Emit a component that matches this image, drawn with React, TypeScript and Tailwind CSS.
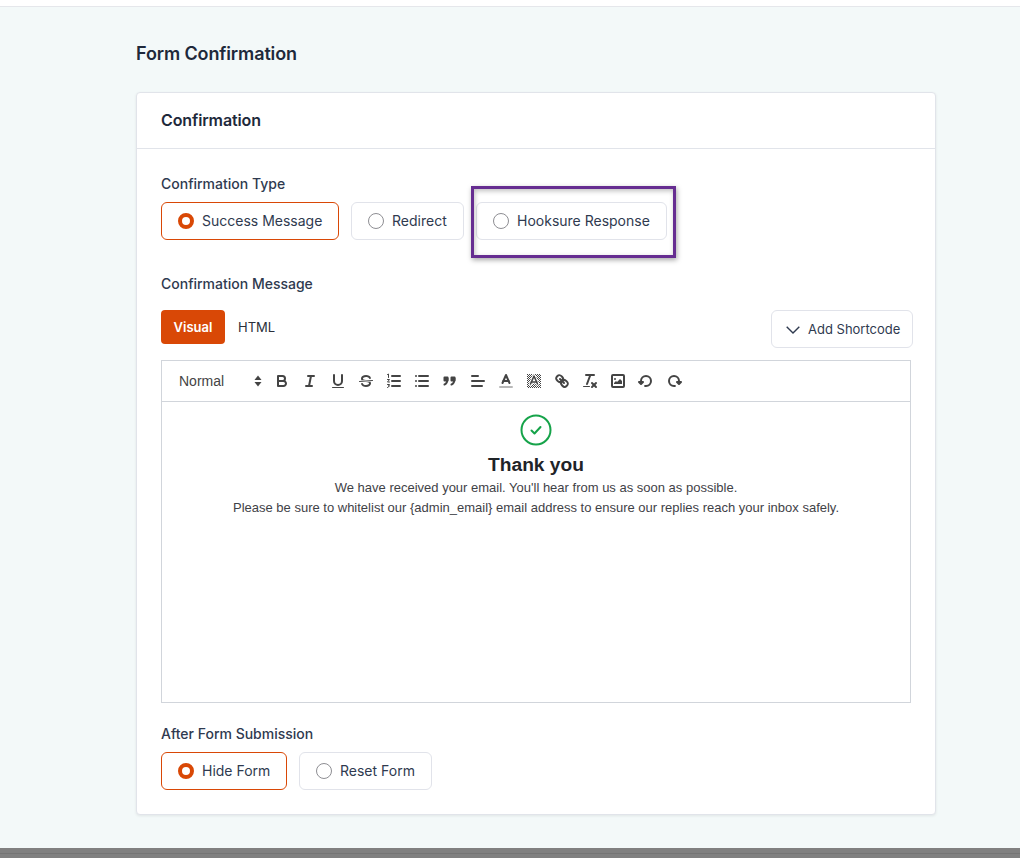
import type { ReactNode } from "react";

function Radio({ label, checked, className }: { label: string; checked?: boolean; className: string }) {
  return (
    <label
      className={`flex h-[38px] items-center gap-2 rounded-md border bg-white text-sm text-[#2f3a4f] ${
        checked ? "border-[#d94806]" : "border-[#e1e3ea]"
      } ${className}`}
    >
      {checked ? (
        <span className="size-4 rounded-full border-[4px] border-[#d94806] bg-white" />
      ) : (
        <span className="size-4 rounded-full border border-[#8e8e93] bg-white" />
      )}
      {label}
    </label>
  );
}

function ToolIcon({ children }: { children: ReactNode }) {
  return (
    <span className="flex h-6 w-7 items-center justify-center">
      <svg
        viewBox="0 0 18 18"
        className="size-[18px] fill-none stroke-[#444444] stroke-2"
        strokeLinecap="round"
        strokeLinejoin="round"
      >
        {children}
      </svg>
    </span>
  );
}

function Toolbar() {
  return (
    <div className="flex h-[41px] items-center border-b border-[#d1d5db] pl-[9px]">
      <div className="flex w-[97px] items-center justify-between pr-[1px] pl-2 font-['Liberation_Sans',sans-serif] text-sm text-[#444444]">
        Normal
        <svg viewBox="0 0 18 18" className="size-[18px] fill-[#444444]">
          <path d="M9 3.5 12.5 8H5.5Z" />
          <path d="M9 14.5 12.5 10H5.5Z" />
        </svg>
      </div>
      <ToolIcon>
        <path d="M5,4H9.5A2.5,2.5,0,0,1,12,6.5v0A2.5,2.5,0,0,1,9.5,9H5V4Z" />
        <path d="M5,9h5.5A2.5,2.5,0,0,1,13,11.5v0A2.5,2.5,0,0,1,10.5,14H5V9Z" />
      </ToolIcon>
      <ToolIcon>
        <line x1="7" x2="13" y1="4" y2="4" />
        <line x1="5" x2="11" y1="14" y2="14" />
        <line x1="8" x2="10" y1="14" y2="4" />
      </ToolIcon>
      <ToolIcon>
        <path d="M5,3V9a4,4,0,0,0,4,4h0a4,4,0,0,0,4-4V3" />
        <rect x="3" y="15" width="12" height="1" rx="0.5" className="fill-[#444444] stroke-0" />
      </ToolIcon>
      <ToolIcon>
        <line x1="15.5" x2="2.5" y1="8.5" y2="9.5" className="stroke-1" />
        <path
          className="fill-[#444444] stroke-0"
          d="M9.007,8C6.542,7.791,6,7.519,6,6.5,6,5.792,7.283,5,9,5c1.571,0,2.765.679,2.969,1.309a1,1,0,0,0,1.9-.617C13.356,4.106,11.354,3,9,3,6.2,3,4,4.538,4,6.5a3.2,3.2,0,0,0,.5,1.843Z"
        />
        <path
          className="fill-[#444444] stroke-0"
          d="M8.984,10C11.457,10.208,12,10.479,12,11.5c0,.708-1.283,1.5-3,1.5-1.571,0-2.765-.679-2.969-1.309a1,1,0,1,0-1.9.617C4.644,13.894,6.646,15,9,15c2.8,0,5-1.538,5-3.5a3.2,3.2,0,0,0-.5-1.843Z"
        />
      </ToolIcon>
      <ToolIcon>
        <line x1="7" x2="15" y1="4" y2="4" />
        <line x1="7" x2="15" y1="9" y2="9" />
        <line x1="7" x2="15" y1="14" y2="14" />
        <path className="stroke-1" d="M2.5 2.5 3.5 2V5.5M2.5 7.5H4.5L2.5 10H4.5M2.5 12.5H4.5L3.5 14H4.5L2.5 15.5" />
      </ToolIcon>
      <ToolIcon>
        <line x1="6" x2="15" y1="4" y2="4" />
        <line x1="6" x2="15" y1="9" y2="9" />
        <line x1="6" x2="15" y1="14" y2="14" />
        <line x1="3" x2="3" y1="4" y2="4" />
        <line x1="3" x2="3" y1="9" y2="9" />
        <line x1="3" x2="3" y1="14" y2="14" />
      </ToolIcon>
      <ToolIcon>
        <rect x="3.5" y="5.5" width="3" height="3" className="fill-[#444444]" />
        <rect x="10.5" y="5.5" width="3" height="3" className="fill-[#444444]" />
        <path d="M6.5,6.5c0,3-.6,5-3,6" />
        <path d="M13.5,6.5c0,3-.6,5-3,6" />
      </ToolIcon>
      <ToolIcon>
        <line x1="3" x2="9" y1="4" y2="4" />
        <line x1="3" x2="15" y1="9" y2="9" />
        <line x1="3" x2="13" y1="14" y2="14" />
      </ToolIcon>
      <ToolIcon>
        <line x1="3" x2="15" y1="15" y2="15" className="stroke-[#b8b8b8]" />
        <polyline points="5.5 11 9 3 12.5 11" />
        <line x1="11.63" x2="6.38" y1="9" y2="9" />
      </ToolIcon>
      <ToolIcon>
        <defs>
          <pattern id="hatch" width="2" height="2" patternUnits="userSpaceOnUse">
            <rect width="1" height="1" className="fill-[#444444] stroke-0" />
            <rect x="1" y="1" width="1" height="1" className="fill-[#444444] stroke-0" />
          </pattern>
        </defs>
        <rect x="2" y="2" width="14" height="14" fill="url(#hatch)" className="stroke-0" />
        <polyline points="5.5 12 9 4 12.5 12" className="stroke-white stroke-[3.4]" />
        <line x1="11.63" x2="6.38" y1="10" y2="10" className="stroke-white stroke-[3]" />
        <polyline points="5.5 12 9 4 12.5 12" className="stroke-[1.6]" />
        <line x1="11.63" x2="6.38" y1="10" y2="10" className="stroke-[1.6]" />
      </ToolIcon>
      <ToolIcon>
        <line x1="7" x2="11" y1="7" y2="11" />
        <path d="M8.9,4.577a3.476,3.476,0,0,1,.36,4.679A3.476,3.476,0,0,1,4.577,8.9C3.185,7.5,2.035,6.4,4.217,4.217S7.5,3.185,8.9,4.577Z" />
        <path d="M13.423,9.1a3.476,3.476,0,0,0-4.679-.36,3.476,3.476,0,0,0,.36,4.679c1.392,1.392,2.5,2.542,4.679.36S14.815,10.5,13.423,9.1Z" />
      </ToolIcon>
      <ToolIcon>
        <line x1="5" x2="13" y1="3" y2="3" />
        <line x1="6" x2="9.35" y1="12" y2="3" />
        <line x1="11" x2="15" y1="11" y2="15" />
        <line x1="15" x2="11" y1="11" y2="15" />
        <rect x="2" y="14" width="7" height="1" rx="0.5" className="fill-[#444444] stroke-0" />
      </ToolIcon>
      <ToolIcon>
        <rect x="3" y="3" width="12" height="12" rx="1" />
        <circle cx="6" cy="7" r="1" className="fill-[#444444] stroke-0" />
        <polyline points="5 12 5 11 7 9 8 10 11 7 13 9 13 12 5 12" className="fill-[#444444] stroke-0" />
      </ToolIcon>
      <ToolIcon>
        <polygon points="6 10 4 12 2 10 6 10" className="fill-[#444444]" />
        <path d="M8.09,13.91A4.6,4.6,0,0,0,9,14,5,5,0,1,0,4,9" />
      </ToolIcon>
      <ToolIcon>
        <polygon points="12 10 14 12 16 10 12 10" className="fill-[#444444]" />
        <path d="M9.91,13.91A4.6,4.6,0,0,1,9,14a5,5,0,1,1,5-5" />
      </ToolIcon>
    </div>
  );
}

export default function App() {
  return (
    <div className="flex h-[858px] flex-col overflow-hidden bg-[#f3f9f9] font-['Inter',sans-serif]">
      <div className="h-[7px] shrink-0 border-b border-[#e5e7eb] bg-white" />
      <main className="ml-[136px] w-[800px] flex-1">
        <h1 className="mt-[35px] mb-[27px] text-lg leading-[23px] font-semibold tracking-[-0.12px] text-[#1e293b]">Form Confirmation</h1>
        <section className="h-[723px] rounded border border-[#e1e4ea] bg-white shadow-[0_1px_3px_rgba(0,0,0,0.08)]">
          <h2 className="flex h-14 items-center border-b border-[#e1e4ea] px-6 pb-0.5 text-base font-semibold tracking-[-0.12px] text-[#1e293b]">
            Confirmation
          </h2>
          <div className="px-6 pt-[26px]">
            <div className="text-sm leading-[18px] font-medium text-[#2f3a4f]">Confirmation Type</div>
            <div className="relative mt-[9px] flex gap-3">
              <Radio label="Success Message" checked className="w-[178px] pl-4" />
              <Radio label="Redirect" className="w-[113px] pl-4" />
              <Radio label="Hooksure Response" className="w-[191px] pl-4" />
              <div className="absolute top-[-16px] left-[310px] h-[72px] w-[205px] border-[3px] border-[#662d91] shadow-[1px_2px_5px_rgba(0,0,0,0.35),inset_1px_2px_5px_rgba(0,0,0,0.25)]" />
            </div>

            <div className="mt-[35px] text-sm leading-[18px] font-medium text-[#2f3a4f]">
              Confirmation Message
            </div>
            <div className="mt-[17px] flex items-start justify-between">
              <div className="flex items-center pt-px">
                <button className="-mt-px h-[34px] w-16 rounded bg-[#d94806] pt-px text-[13px] font-semibold text-white">Visual</button>
                <button className="ml-[13px] text-[13px] text-[#2a2f3a]">HTML</button>
              </div>
              <button className="-mr-0.5 flex h-[38px] w-[142px] items-center gap-2 rounded-md border border-[#e1e3ea] bg-white pt-0.5 pl-[14px] text-[13px] text-[#2f3a4f]">
                <svg viewBox="0 0 14 8" className="h-2 w-[14px] fill-none stroke-[#2f3a4f] stroke-[1.4]">
                  <path d="M.7.7 7 7 13.3.7" />
                </svg>
                Add Shortcode
              </button>
            </div>

            <div className="mt-3 h-[343px] border border-[#d1d5db] font-['Liberation_Sans',sans-serif]">
              <Toolbar />
              <div className="pt-3 text-center text-[13px] leading-[20px] text-[#3f4247]">
                <svg viewBox="0 0 32 32" className="mx-auto size-8 fill-none stroke-[#16a34a] stroke-2" strokeLinecap="round" strokeLinejoin="round">
                  <circle cx="16" cy="16" r="14.5" />
                  <path d="M11.5 16.5 14.5 19.5 20.5 13" />
                </svg>
                <div className="mt-1 text-[19.2px] leading-[30px] font-bold text-[#1f2328]">Thank you</div>
                <p className="-mt-[2px]">We have received your email. You'll hear from us as soon as possible.</p>
                <p>Please be sure to whitelist our {"{admin_email}"} email address to ensure our replies reach your inbox safely.</p>
              </div>
            </div>

            <div className="mt-[22px] text-sm leading-[18px] font-medium text-[#2f3a4f]">After Form Submission</div>
            <div className="mt-[9px] flex gap-3">
              <Radio label="Hide Form" checked className="w-[126px] pl-4" />
              <Radio label="Reset Form" className="w-[133px] pl-4" />
            </div>
          </div>
        </section>
      </main>
      <div className="h-[10px] shrink-0 bg-[#808080]">
        <div className="h-[6px] border-b border-[#747474]" />
      </div>
    </div>
  );
}
